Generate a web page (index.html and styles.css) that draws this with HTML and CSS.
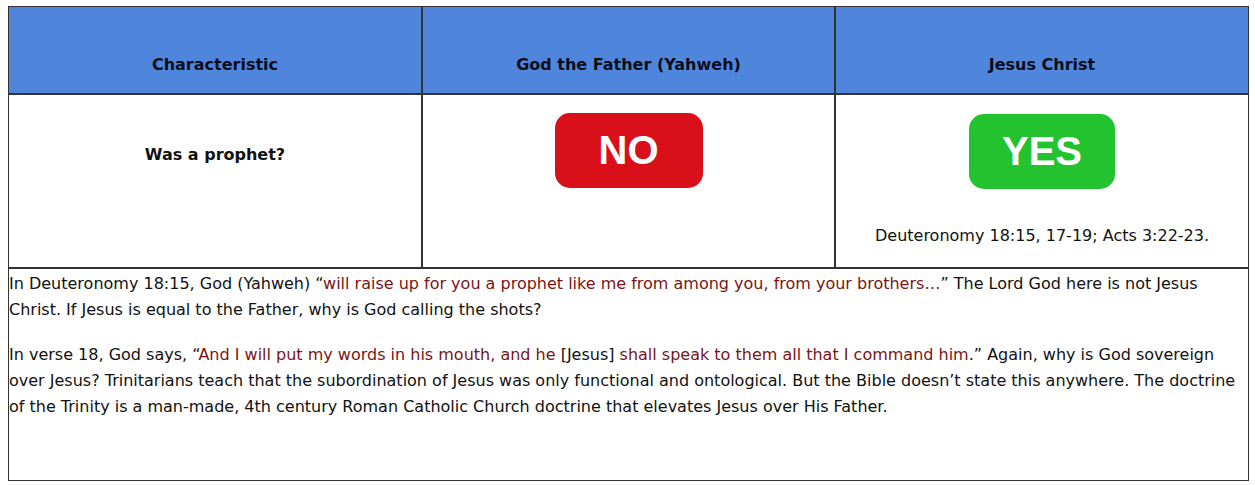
FILE: index.html
```html
<!DOCTYPE html>
<html>
<head>
<meta charset="utf-8">
<link rel="stylesheet" href="styles.css">
</head>
<body>
<div class="box">
  <table class="cmp">
    <tr class="head">
      <th>Characteristic</th>
      <th>God the Father (Yahweh)</th>
      <th>Jesus Christ</th>
    </tr>
    <tr class="row">
      <td><div class="char">Was a prophet?</div></td>
      <td><span class="badge no">NO</span></td>
      <td><span class="badge yes">YES</span><div class="ref">Deuteronomy 18:15, 17-19; Acts 3:22-23.</div></td>
    </tr>
  </table>
  <div class="text">
    <p>In Deuteronomy 18:15, God (Yahweh) “<span class="q">will raise up for you a prophet like me from among you, from your brothers…</span>” The Lord God here is not Jesus Christ. If Jesus is equal to the Father, why is God calling the shots?</p>
    <p>In verse 18, God says, “<span class="q">And I will put my words in his mouth, and he </span>[Jesus]<span class="q"> shall speak to them all that I command him</span>.” Again, why is God sovereign over Jesus? Trinitarians teach that the subordination of Jesus was only functional and ontological. But the Bible doesn’t state this anywhere. The doctrine of the Trinity is a man-made, 4th century Roman Catholic Church doctrine that elevates Jesus over His Father.</p>
  </div>
</div>
</body>
</html>
```
FILE: styles.css
```css
html, body { margin: 0; padding: 0; background: #fff; }
body { padding: 6px 6px 0 8px; font-family: "DejaVu Sans", Verdana, sans-serif; color: #111; }
.box { width: 1241px; height: 475px; border: 1px solid #333; box-sizing: border-box; overflow: hidden; }
.cmp { width: 100%; border-collapse: collapse; table-layout: fixed; }
.cmp th, .cmp td { border: 2px solid #333; }
.cmp tr:first-child th { border-top: 0; }
.cmp th:first-child, .cmp td:first-child { border-left: 0; }
.cmp th:last-child, .cmp td:last-child { border-right: 0; }
.head th { background: #4f86db; height: 67px; vertical-align: bottom; padding: 0 0 19px; font-size: 16px; font-weight: bold; color: #0b0d1a; }
.row td { height: 172px; vertical-align: top; text-align: center; padding: 0; }
.char { padding-top: 50px; font-size: 16px; font-weight: bold; }
.badge { display: inline-block; width: 148px; height: 75px; border-radius: 15px; color: #fff; font-family: "Liberation Sans", Arial, sans-serif; font-weight: bold; font-size: 40px; line-height: 75px; margin-top: 18px; }
.no { background: #d90f1a; }
.yes { background: #23c330; width: 146px; margin-top: 19px; }
.ref { font-size: 16px; margin-top: 37px; color: #111; }
.text { font-size: 16px; line-height: 26px; padding-top: 2px; }
.text p { margin: 0 0 19px; }
.q { color: #7a1414; }
```
